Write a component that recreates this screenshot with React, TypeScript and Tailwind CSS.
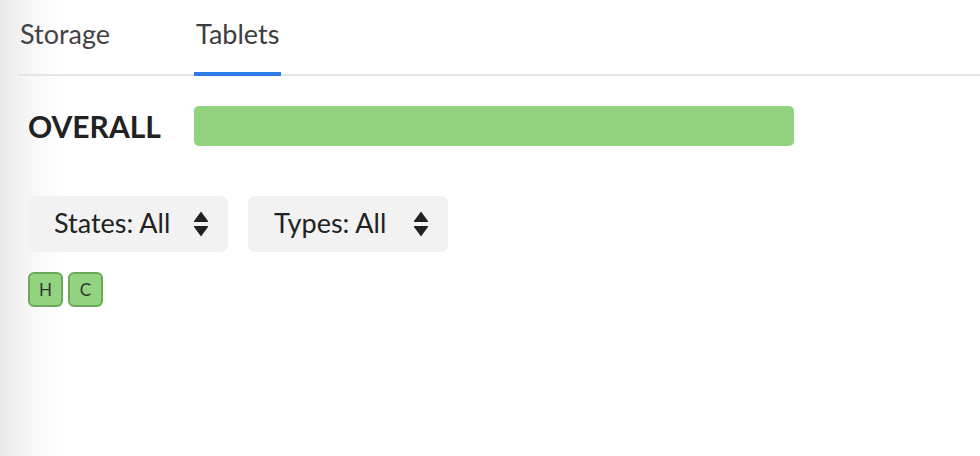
import React from "react";

function SortIcon() {
  return (
    <svg width="16" height="28" viewBox="0 0 16 28" className="block">
      <path d="M8 1.5 L15 11 Q15.5 12 14.3 12 L1.7 12 Q0.5 12 1 11 Z" fill="#222" />
      <path d="M8 26.5 L15 17 Q15.5 16 14.3 16 L1.7 16 Q0.5 16 1 17 Z" fill="#222" />
    </svg>
  );
}

function SelectBox({ label }: { label: string }) {
  return (
    <div className="flex h-[56px] w-[200px] items-center justify-between rounded-[8px] bg-[#f2f2f2] pl-[26px] pr-[19px]">
      <span className="mb-[3px] text-[27px] leading-none text-[#222]">{label}</span>
      <SortIcon />
    </div>
  );
}

function Badge({ label }: { label: string }) {
  return (
    <div className="flex h-[35px] w-[35px] items-center justify-center rounded-[6px] border-2 border-[#6ca85c] bg-[#93d480] text-[17px] leading-none text-[#333]">
      <span>{label}</span>
    </div>
  );
}

export default function App() {
  return (
    <div
      className="h-[456px] w-[980px] overflow-hidden bg-[linear-gradient(to_right,#e8e8e8_0px,#f7f7f7_30px,#ffffff_62px)]"
      style={{ fontFamily: "Lato, 'Open Sans', sans-serif" }}
    >
      <div className="ml-[18px] flex h-[76px] border-b-2 border-[#e5e5e5]">
        <div className="pl-[2px] pt-[20px] text-[27px] leading-none text-[#444]">Storage</div>
        <div className="relative ml-[84px] px-[2px] pt-[20px] text-[27px] leading-none text-[#3d3d3d]">
          Tablets
          <div className="absolute bottom-[-2px] left-0 right-0 h-[4px] bg-[#2f7be5]" />
        </div>
      </div>
      <div className="ml-[28px] mt-[30px] flex items-center">
        <div className="w-[166px] text-[30px] font-bold leading-none text-[#222]">OVERALL</div>
        <div className="h-[40px] w-[600px] rounded-[5px] bg-[#91d37f]" />
      </div>
      <div className="ml-[28px] mt-[50px] flex gap-[20px]">
        <SelectBox label="States: All" />
        <SelectBox label="Types: All" />
      </div>
      <div className="ml-[28px] mt-[20px] flex gap-[5px]">
        <Badge label="H" />
        <Badge label="C" />
      </div>
    </div>
  );
}
